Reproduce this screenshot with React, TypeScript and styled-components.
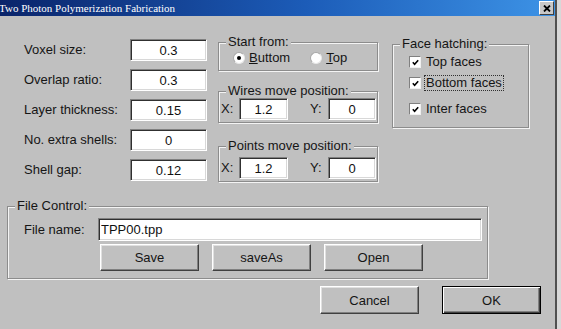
import React from 'react';
import styled, { createGlobalStyle } from 'styled-components';

const GlobalStyle = createGlobalStyle`
  html, body {
    margin: 0;
    padding: 0;
    background: #d8d8d8;
  }

  body {
    font-family: "Liberation Sans", Arial, sans-serif;
    font-size: 13px;
    color: #151515;
  }
`;

const Window = styled.div`
  width: 557px;
  height: 329px;
  box-sizing: border-box;
  background: #c0c0c0;
  border-right: 2px solid #505050;
  display: flex;
  flex-direction: column;
  overflow: hidden;
`;

const TitleBar = styled.div`
  height: 16px;
  flex-shrink: 0;
  display: flex;
  align-items: center;
  justify-content: space-between;
  padding-right: 1px;
  background: linear-gradient(to right, #0a246a 0%, #1c5cb8 55%, #3d93e6 100%);
`;

const TitleText = styled.span`
  font-family: "Liberation Serif", "Times New Roman", serif;
  font-size: 11px;
  color: #ffffff;
  white-space: nowrap;
  margin-left: -1px;
`;

const CloseButton = styled.div`
  width: 15px;
  height: 14px;
  box-sizing: border-box;
  background: #c8c8c8;
  border: 1px solid;
  border-color: #ffffff #404040 #404040 #ffffff;
  display: flex;
  align-items: center;
  justify-content: center;
`;

const Client = styled.div`
  flex: 1;
  display: flex;
  flex-direction: column;
  padding-left: 7px;
`;

const TopRow = styled.div`
  display: flex;
  align-items: flex-start;
  padding-left: 17px;
`;

const ParamGrid = styled.div`
  margin-top: 23px;
  display: grid;
  grid-template-columns: 106px 77px;
  grid-auto-rows: 22px;
  row-gap: 8px;
  align-items: center;
`;

const Label = styled.span`
  white-space: nowrap;
  line-height: 14px;
`;

const TextBox = styled.input<{ $w?: number; $h?: number; $left?: boolean }>`
  width: ${(p) => (p.$w ? `${p.$w}px` : '100%')};
  height: ${(p) => p.$h ?? 22}px;
  box-sizing: border-box;
  margin: 0;
  padding: ${(p) => (p.$left ? '0 0 0 2px' : '0')};
  background: #ffffff;
  border: 1px solid;
  border-color: #808080 #ffffff #ffffff #808080;
  box-shadow: inset 1px 1px 0 #303030, inset -1px -1px 0 #d8d8d8;
  font-family: "Liberation Sans", Arial, sans-serif;
  font-size: 13px;
  color: #111111;
  text-align: ${(p) => (p.$left ? 'left' : 'center')};
  outline: none;
`;

const MiddleColumn = styled.div`
  margin-left: 11px;
  width: 160px;
  display: flex;
  flex-direction: column;
`;

const Group = styled.fieldset<{ $top: number; $pt?: number; $pb?: number; $w?: number }>`
  margin: ${(p) => p.$top}px 0 0 0;
  padding: ${(p) => p.$pt ?? 0}px 0 ${(p) => p.$pb ?? 2}px 0;
  width: ${(p) => (p.$w ? `${p.$w}px` : 'auto')};
  box-sizing: border-box;
  min-width: 0;
  border: 1px solid #8c8c8c;
  box-shadow: inset 1px 1px 0 #f4f4f4, 1px 1px 0 #f4f4f4;
`;

const Legend = styled.legend`
  margin-left: 7px;
  padding: 0 2px;
  line-height: 14px;
  height: 14px;
  background: #c0c0c0;
  white-space: nowrap;
`;

const RadioRow = styled.div`
  display: flex;
  align-items: center;
  height: 14px;
  padding-left: 14px;
`;

const RadioOption = styled.label<{ $gapAfter?: number }>`
  display: flex;
  align-items: center;
  gap: 4px;
  margin-right: ${(p) => p.$gapAfter ?? 0}px;
  line-height: 14px;
`;

const RadioDot = styled.span<{ $checked?: boolean }>`
  width: 12px;
  height: 12px;
  box-sizing: border-box;
  border-radius: 50%;
  background: #ffffff;
  border: 1px solid;
  border-color: #a8a8a8 #e8e8e8 #e8e8e8 #a8a8a8;
  display: flex;
  align-items: center;
  justify-content: center;

  &::after {
    content: '';
    width: 4px;
    height: 4px;
    border-radius: 50%;
    background: ${(p) => (p.$checked ? '#000000' : 'transparent')};
  }
`;

const CoordRow = styled.div`
  display: flex;
  align-items: center;
  padding-left: 2px;
`;

const CoordLabel = styled.span<{ $ml?: number }>`
  margin-left: ${(p) => p.$ml ?? 0}px;
  width: 18px;
  line-height: 14px;
`;

const RightColumn = styled.div`
  margin-left: 14px;
  width: 137px;
  display: flex;
  flex-direction: column;
`;

const CheckRow = styled.label<{ $mt?: number }>`
  display: flex;
  align-items: center;
  height: 16px;
  margin-top: ${(p) => p.$mt ?? 0}px;
  padding-left: 16px;
  gap: 3px;
`;

const CheckBox = styled.span`
  width: 12px;
  height: 12px;
  box-sizing: border-box;
  background: #ffffff;
  border: 1px solid;
  border-color: #808080 #f0f0f0 #f0f0f0 #808080;
  display: flex;
  align-items: center;
  justify-content: center;
`;

const CheckText = styled.span<{ $focus?: boolean }>`
  padding: 0 1px;
  line-height: 14px;
  border: 1px dotted ${(p) => (p.$focus ? '#303030' : 'transparent')};
  white-space: nowrap;
`;

const FileRow = styled.div`
  display: flex;
  align-items: center;
  padding-left: 16px;
  padding-right: 5px;
`;

const FileLabel = styled.span`
  width: 74px;
  flex-shrink: 0;
  line-height: 14px;
`;

const FileButtons = styled.div`
  display: flex;
  gap: 13px;
  margin-top: 3px;
  padding-left: 92px;
`;

const Button = styled.button<{ $default?: boolean; $h?: number }>`
  width: 99px;
  height: ${(p) => p.$h ?? 27}px;
  box-sizing: border-box;
  margin: 0;
  padding: 0;
  background: #c0c0c0;
  border: 1px solid;
  border-color: ${(p) => (p.$default ? '#000000' : '#ffffff #404040 #404040 #ffffff')};
  box-shadow: ${(p) =>
    p.$default
      ? 'inset 1px 1px 0 #ffffff, inset -1px -1px 0 #404040, inset -2px -2px 0 #808080'
      : 'inset -1px -1px 0 #808080, inset 1px 1px 0 #e0e0e0'};
  font-family: "Liberation Sans", Arial, sans-serif;
  font-size: 13px;
  color: #151515;
`;

const DialogButtons = styled.div`
  display: flex;
  justify-content: flex-end;
  gap: 23px;
  margin-top: 7px;
  padding-right: 14px;
`;

function CheckMark () {
  return (
    <svg width='7' height='7' viewBox='0 0 7 7'>
      <path d='M0.8 3.3 L2.6 5.2 L6.2 1.2' fill='none' stroke='#000' strokeWidth='1.6' />
    </svg>
  );
}

function CheckItem ({ label, focus, mt }: { label: string; focus?: boolean; mt?: number }) {
  return (
    <CheckRow $mt={mt}>
      <CheckBox><CheckMark /></CheckBox>
      <CheckText $focus={focus}>{label}</CheckText>
    </CheckRow>
  );
}

function CoordInputs ({ x, y }: { x: string; y: string }) {
  return (
    <CoordRow>
      <CoordLabel>X:</CoordLabel>
      <TextBox readOnly value={x} $w={49} />
      <CoordLabel $ml={22}>Y:</CoordLabel>
      <TextBox readOnly value={y} $w={48} />
    </CoordRow>
  );
}

const params = [
  { label: 'Voxel size:', value: '0.3' },
  { label: 'Overlap ratio:', value: '0.3' },
  { label: 'Layer thickness:', value: '0.15' },
  { label: 'No. extra shells:', value: '0' },
  { label: 'Shell gap:', value: '0.12' }
];

export default function App () {
  return (
    <>
      <GlobalStyle />
      <Window>
        <TitleBar>
          <TitleText>Two Photon Polymerization Fabrication</TitleText>
          <CloseButton>
            <svg width='8' height='7' viewBox='0 0 8 7'>
              <path d='M1 0.5 L7 6.5 M7 0.5 L1 6.5' stroke='#000' strokeWidth='1.8' />
            </svg>
          </CloseButton>
        </TitleBar>
        <Client>
          <TopRow>
            <ParamGrid>
              {params.map((p) => (
                <React.Fragment key={p.label}>
                  <Label>{p.label}</Label>
                  <TextBox readOnly value={p.value} />
                </React.Fragment>
              ))}
            </ParamGrid>

            <MiddleColumn>
              <Group $top={19} $pt={2} $pb={5}>
                <Legend>Start from:</Legend>
                <RadioRow>
                  <RadioOption $gapAfter={20}>
                    <RadioDot $checked />
                    <span><u>B</u>uttom</span>
                  </RadioOption>
                  <RadioOption>
                    <RadioDot />
                    <span><u>T</u>op</span>
                  </RadioOption>
                </RadioRow>
              </Group>

              <Group $top={13} $pt={0} $pb={2}>
                <Legend>Wires move position:</Legend>
                <CoordInputs x='1.2' y='0' />
              </Group>

              <Group $top={16} $pt={4} $pb={2}>
                <Legend>Points move position:</Legend>
                <CoordInputs x='1.2' y='0' />
              </Group>
            </MiddleColumn>

            <RightColumn>
              <Group $top={21} $pt={3} $pb={10}>
                <Legend>Face hatching:</Legend>
                <CheckItem label='Top faces' />
                <CheckItem label='Bottom faces' focus mt={5} />
                <CheckItem label='Inter faces' mt={10} />
              </Group>
            </RightColumn>
          </TopRow>

          <Group $top={17} $pt={5} $pb={7} $w={481}>
            <Legend>File Control:</Legend>
            <FileRow>
              <FileLabel>File name:</FileLabel>
              <TextBox readOnly value='TPP00.tpp' $h={23} $left />
            </FileRow>
            <FileButtons>
              <Button>Save</Button>
              <Button>saveAs</Button>
              <Button>Open</Button>
            </FileButtons>
          </Group>

          <DialogButtons>
            <Button $h={28}>Cancel</Button>
            <Button $h={28} $default>OK</Button>
          </DialogButtons>
        </Client>
      </Window>
    </>
  );
}
